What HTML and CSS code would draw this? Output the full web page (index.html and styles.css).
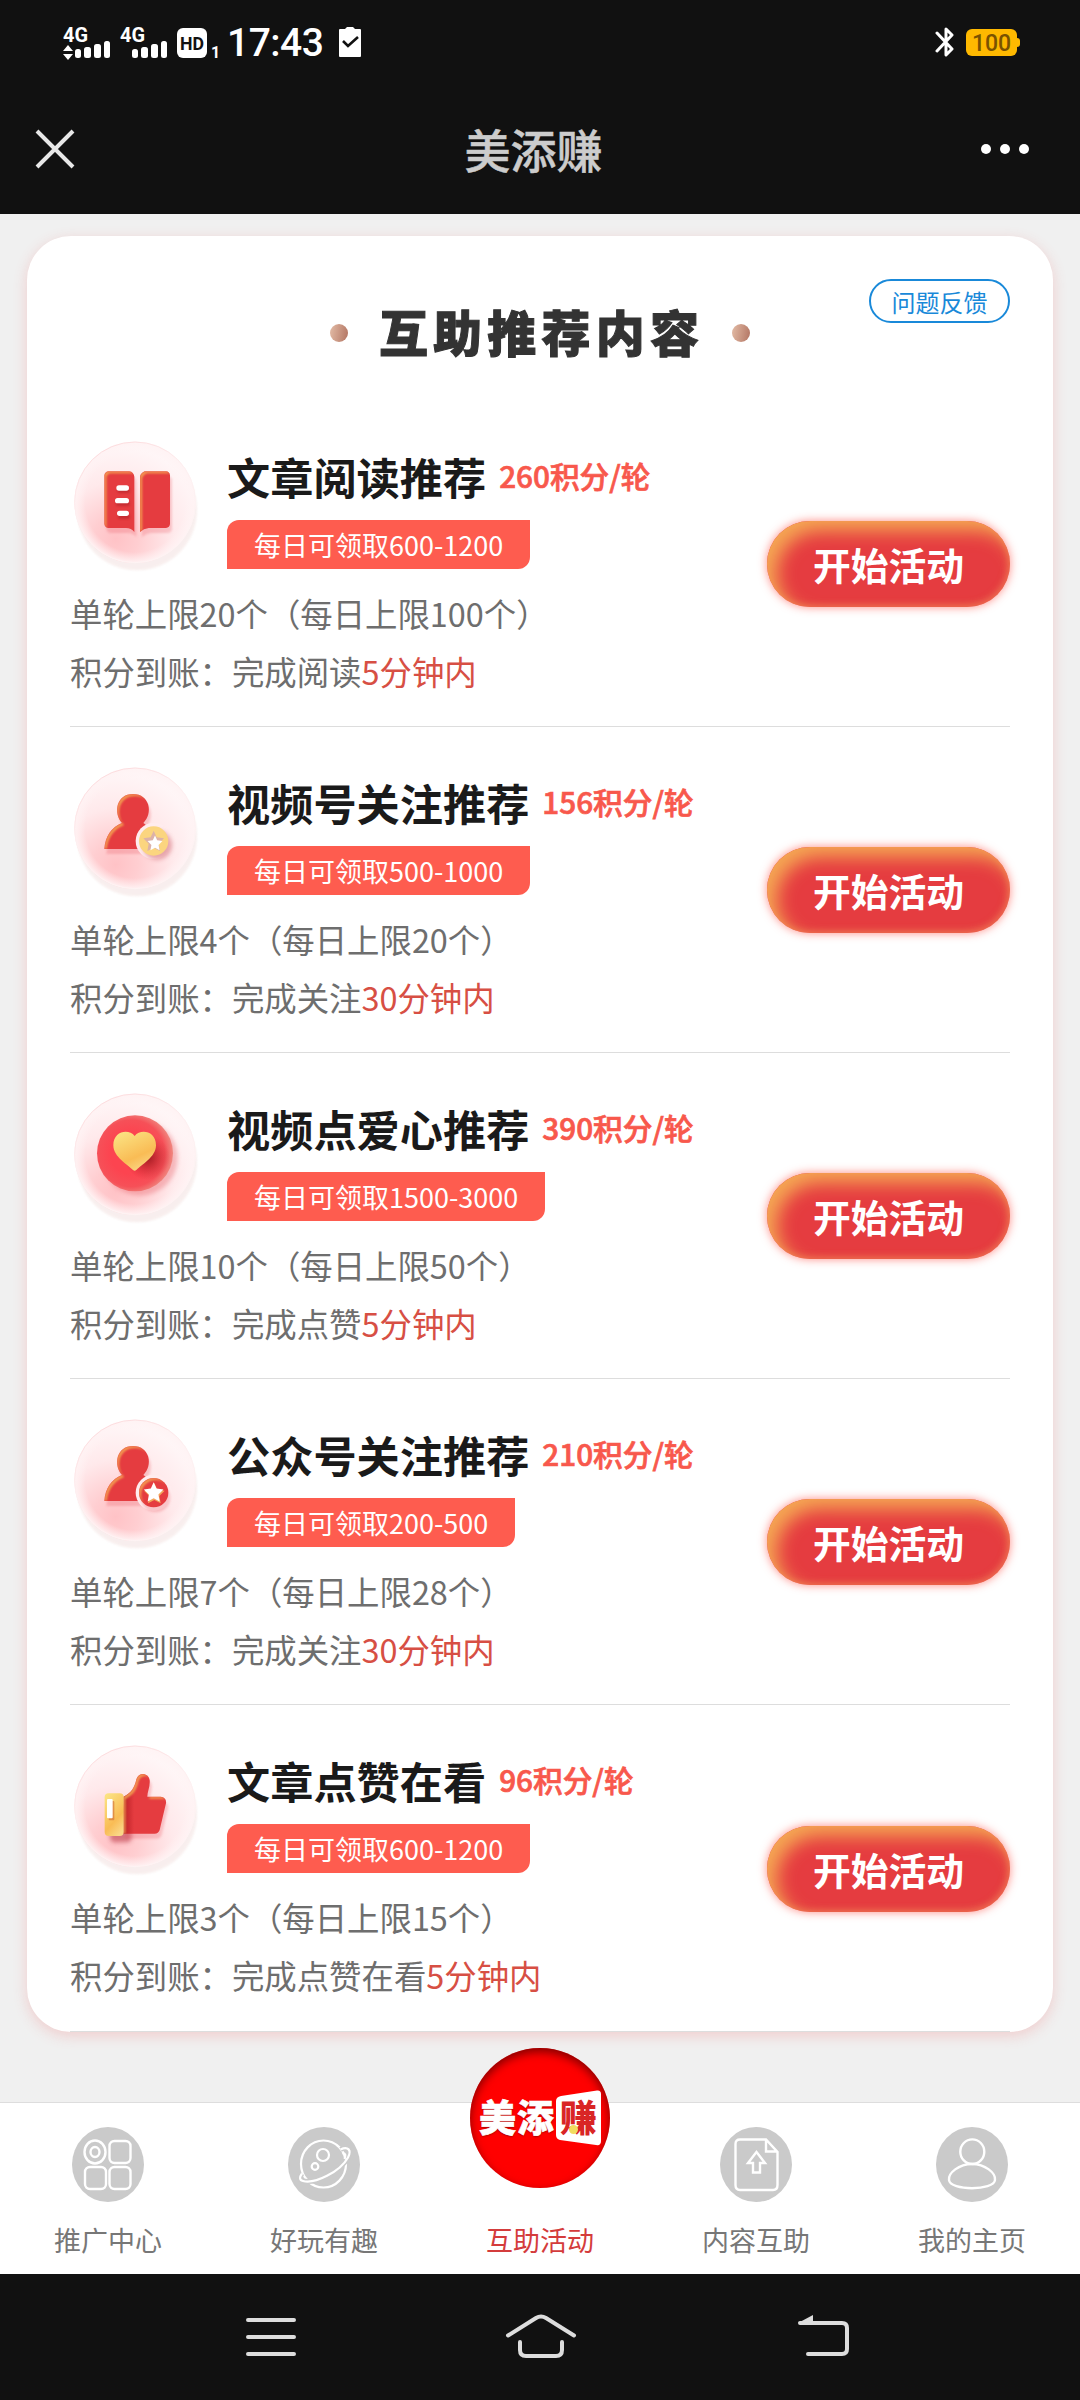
FILE: index.html
```html
<!DOCTYPE html>
<html lang="zh-CN">
<head>
<meta charset="utf-8">
<title>美添赚</title>
<link rel="stylesheet" href="styles.css">
</head>
<body>
<svg class="defs" width="0" height="0">
  <defs>
    <radialGradient id="disc" cx="0.34" cy="0.8" r="0.85">
      <stop offset="0" stop-color="#ffc2c6"/><stop offset="0.22" stop-color="#ffced1"/><stop offset="0.55" stop-color="#ffe9eb"/><stop offset="0.9" stop-color="#fff6f7"/>
    </radialGradient>
    <radialGradient id="discEdge"><stop offset="0.82" stop-color="#fff3f4" stop-opacity="0"/><stop offset="1" stop-color="#fff3f4" stop-opacity="0.95"/></radialGradient>
    <linearGradient id="rim" x1="0.2" y1="0" x2="0.6" y2="0.9"><stop offset="0" stop-color="#fcd9db"/><stop offset="0.5" stop-color="#fdf0f1"/><stop offset="1" stop-color="#fdf3f3"/></linearGradient>
    <linearGradient id="gold" x1="0.2" y1="0" x2="0.7" y2="1"><stop offset="0" stop-color="#fbe282"/><stop offset="0.65" stop-color="#f9bc55"/><stop offset="1" stop-color="#fad888"/></linearGradient>
    <radialGradient id="ball" cx="0.45" cy="0.5" r="0.55"><stop offset="0.5" stop-color="#fc4450"/><stop offset="0.8" stop-color="#f65058"/><stop offset="1" stop-color="#ef8880"/></radialGradient>
    <radialGradient id="ballShade"><stop offset="0" stop-color="#8e1418" stop-opacity="0.85"/><stop offset="1" stop-color="#c02028" stop-opacity="0"/></radialGradient>
    <linearGradient id="handShade" x1="0" x2="1"><stop offset="0" stop-color="#b81f25"/><stop offset="0.25" stop-color="#e53c40"/></linearGradient>
    <filter id="soft" x="-40%" y="-40%" width="180%" height="180%"><feGaussianBlur stdDeviation="7"/></filter>
    <filter id="soft3" x="-40%" y="-40%" width="180%" height="180%"><feGaussianBlur stdDeviation="3"/></filter>
    <filter id="glow" x="-20%" y="-20%" width="150%" height="150%" color-interpolation-filters="sRGB">
      <feOffset in="SourceAlpha" dx="6" dy="6" result="o"/>
      <feComposite in="SourceAlpha" in2="o" operator="out" result="e"/>
      <feGaussianBlur in="e" stdDeviation="3.5" result="b"/>
      <feFlood flood-color="#f4a552"/><feComposite in2="b" operator="in" result="f"/>
      <feComposite in="f" in2="SourceAlpha" operator="in" result="g"/>
      <feOffset in="SourceAlpha" dx="7" dy="16" result="s"/><feGaussianBlur in="s" stdDeviation="3" result="sb"/>
      <feFlood flood-color="#e8505a" flood-opacity="0.25"/><feComposite in2="sb" operator="in" result="sh"/>
      <feMerge><feMergeNode in="sh"/><feMergeNode in="SourceGraphic"/><feMergeNode in="g"/></feMerge>
    </filter>
    <symbol id="plate" viewBox="0 0 396 420" overflow="visible">
      <circle cx="207" cy="223" r="180" fill="#f7ebea" opacity="0.8" filter="url(#soft3)"/>
      <circle cx="201" cy="199" r="182" fill="url(#disc)"/>
      <circle cx="201" cy="199" r="182" fill="url(#discEdge)"/>
      <circle cx="201" cy="199" r="181" fill="none" stroke="url(#rim)" stroke-width="3"/>
    </symbol>
    <path id="person" d="M133 297 C136 258 154 232 186 219 C160 190 168 132 219 132 C270 132 280 190 250 219 Q270 232 244 240 Q222 268 241 297 Z"/>
    <path id="star" d="M0 -31 L9 -11 L31 -8 L15 8 L19 30 L0 20 L-19 30 L-15 8 L-31 -8 L-9 -11 Z"/>
  </defs>
</svg>

<header class="status">
  <svg class="signals" viewBox="0 0 160 36" width="160" height="36">
    <g fill="#fff">
      <text class="net" x="0" y="16.500" textLength="25" lengthAdjust="spacingAndGlyphs">4G</text>
      <path d="M0 26 L5 20 L10 26Z M0 29 L5 35 L10 29Z"/>
      <rect x="12" y="24" width="6" height="9" rx="2.5"/><rect x="21" y="22" width="7" height="11" rx="2.5"/><rect x="31" y="19" width="7" height="14" rx="2.5"/><rect x="41" y="16" width="6" height="17" rx="2.5"/>
      <text class="net" x="57" y="16.500" textLength="25" lengthAdjust="spacingAndGlyphs">4G</text>
      <rect x="69" y="24" width="6" height="9" rx="2.5"/><rect x="78" y="22" width="7" height="11" rx="2.5"/><rect x="88" y="19" width="7" height="14" rx="2.5"/><rect x="98" y="16" width="6" height="17" rx="2.5"/>
      <rect x="114" y="3" width="30" height="30" rx="6"/>
      <text class="sim" x="148" y="33">1</text>
    </g>
    <text class="hd" x="117" y="25" textLength="24" lengthAdjust="spacingAndGlyphs">HD</text>
  </svg>
  <span class="time">17:43</span>
  <svg class="clip" viewBox="0 0 22 30" width="22" height="30"><path fill="#fff" d="M1 2H6L8 0H14L16 2H21Q22 2 22 3V29Q22 30 21 30H1Q0 30 0 29V3Q0 2 1 2Z"/><path d="M4 14 L9 19 L19 10" fill="none" stroke="#111" stroke-width="2.6"/></svg>
  <svg class="bt" viewBox="0 0 20 32" width="20" height="32"><path d="M2 7 L17 23 L11 29 V3 L17 9 L2 25" fill="none" stroke="#fff" stroke-width="3" stroke-linejoin="round" stroke-linecap="round"/></svg>
  <span class="battery">100</span>
</header>

<nav class="titlebar">
  <svg viewBox="0 0 40 40" width="40" height="40"><path d="M2 2 L38 38 M38 2 L2 38" stroke="#e8e8e8" stroke-width="4" fill="none"/></svg>
  <h1>美添赚</h1>
  <svg viewBox="0 0 50 12" width="50" height="12"><g fill="#fff"><circle cx="6" cy="6" r="5"/><circle cx="25" cy="6" r="5"/><circle cx="44" cy="6" r="5"/></g></svg>
</nav>

<main class="page">
  <section class="card">
    <div class="card-head">
      <i class="dot"></i><h2>互助推荐内容</h2><i class="dot"></i>
      <a class="feedback">问题反馈</a>
    </div>

    <article class="item">
      <div class="info">
        <div class="top">
          <svg class="icon" viewBox="0 0 396 396">
            <use href="#plate" width="396" height="420"/>
            <g transform="translate(-54 -48)">
              <g filter="url(#glow)" fill="#e53c40">
                <path d="M176 154 H238 Q251 156 253 170 V336 Q244 324 228 324 H176 Q164 323 163 311 V166 Q165 155 176 154Z"/>
                <path d="M284 154 H348 Q359 155 360 166 V312 Q359 323 348 324 H296 Q281 326 270 336 V170 Q272 159 284 154Z"/>
              </g>
              <g stroke="#a81e22" stroke-width="14" stroke-linecap="round" opacity="0.5" filter="url(#soft3)"><path d="M209 212H233M205 251H233M211 290H233"/></g>
              <g stroke="#fff" stroke-width="16" stroke-linecap="round"><path d="M207 204H229M203 242H229M209 280H229"/></g>
            </g>
          </svg>
          <div class="heading">
            <div class="name"><h3>文章阅读推荐</h3><b>260积分/轮</b></div>
            <span class="tag">每日可领取600-1200</span>
          </div>
        </div>
        <p>单轮上限20个（每日上限100个）</p>
        <p>积分到账：完成阅读<em>5分钟内</em></p>
      </div>
      <a class="go">开始活动</a>
    </article>

    <article class="item">
      <div class="info">
        <div class="top">
          <svg class="icon" viewBox="0 0 396 396">
            <use href="#plate" width="396" height="420"/>
            <g transform="translate(-24 -36)">
              <use href="#person" fill="#e53c40" filter="url(#glow)"/>
              <circle cx="281" cy="273" r="54" fill="#ffecee"/>
              <circle cx="292" cy="285" r="44" fill="#d0606a" opacity="0.5" filter="url(#soft)"/>
              <circle cx="281" cy="273" r="44" fill="#fbd57f"/>
              <use href="#star" transform="translate(281 273)" fill="#dcb2a8"/>
              <use href="#star" transform="translate(285 279) scale(.72)" fill="#fff" filter="url(#soft3)"/>
            </g>
          </svg>
          <div class="heading">
            <div class="name"><h3>视频号关注推荐</h3><b>156积分/轮</b></div>
            <span class="tag">每日可领取500-1000</span>
          </div>
        </div>
        <p>单轮上限4个（每日上限20个）</p>
        <p>积分到账：完成关注<em>30分钟内</em></p>
      </div>
      <a class="go">开始活动</a>
    </article>

    <article class="item">
      <div class="info">
        <div class="top">
          <svg class="icon" viewBox="0 0 396 396">
            <use href="#plate" width="396" height="420"/>
            <g transform="translate(-24 -24)">
              <circle cx="240" cy="234" r="113" fill="#e86870" opacity="0.4" filter="url(#soft)"/>
              <circle cx="225" cy="220" r="114" fill="url(#ball)"/>
              <ellipse cx="262" cy="232" rx="68" ry="68" fill="url(#ballShade)"/>
              <path fill="url(#gold)" d="M224 168 C242 145 288 153 288 196 C288 231 244 255 229 270 Q224 275 219 270 C204 255 160 231 160 196 C160 153 206 145 224 168Z"/>
            </g>
          </svg>
          <div class="heading">
            <div class="name"><h3>视频点爱心推荐</h3><b>390积分/轮</b></div>
            <span class="tag">每日可领取1500-3000</span>
          </div>
        </div>
        <p>单轮上限10个（每日上限50个）</p>
        <p>积分到账：完成点赞<em>5分钟内</em></p>
      </div>
      <a class="go">开始活动</a>
    </article>

    <article class="item">
      <div class="info">
        <div class="top">
          <svg class="icon" viewBox="0 0 396 396">
            <use href="#plate" width="396" height="420"/>
            <g transform="translate(-24 -36)">
              <use href="#person" fill="#e53c40" filter="url(#glow)"/>
              <circle cx="281" cy="272" r="54" fill="#ffecee"/>
              <circle cx="281" cy="272" r="44" fill="#e53c40" filter="url(#glow)"/>
              <use href="#star" transform="translate(283 274)" fill="#f3a65c"/>
              <use href="#star" transform="translate(281 270) scale(.95)" fill="#fff"/>
            </g>
          </svg>
          <div class="heading">
            <div class="name"><h3>公众号关注推荐</h3><b>210积分/轮</b></div>
            <span class="tag">每日可领取200-500</span>
          </div>
        </div>
        <p>单轮上限7个（每日上限28个）</p>
        <p>积分到账：完成关注<em>30分钟内</em></p>
      </div>
      <a class="go">开始活动</a>
    </article>

    <article class="item">
      <div class="info">
        <div class="top">
          <svg class="icon" viewBox="0 0 396 396">
            <use href="#plate" width="396" height="420"/>
            <g transform="translate(-24 -30)">
              <rect x="150" y="225" width="65" height="112" rx="14" fill="#b83040" opacity="0.55" filter="url(#soft)"/>
              <path filter="url(#glow)" fill="url(#handShade)" d="M190 200 C214 190 224 172 229 148 C236 124 266 128 269 150 C271 170 262 184 262 200 H302 Q320 202 318 220 L299 300 Q295 311 284 311 H190Z"/>
              <rect x="134" y="190" width="57" height="128" rx="12" fill="url(#gold)"/>
              <rect x="146" y="213" width="17" height="58" rx="3" fill="#d06a36" opacity="0.6"/>
              <rect x="141" y="207" width="17" height="58" rx="3" fill="#fff"/>
            </g>
          </svg>
          <div class="heading">
            <div class="name"><h3>文章点赞在看</h3><b>96积分/轮</b></div>
            <span class="tag">每日可领取600-1200</span>
          </div>
        </div>
        <p>单轮上限3个（每日上限15个）</p>
        <p>积分到账：完成点赞在看<em>5分钟内</em></p>
      </div>
      <a class="go">开始活动</a>
    </article>
  </section>
</main>

<footer class="tabs">
  <a class="tab">
    <svg viewBox="0 0 72 75" width="72" height="75"><ellipse cx="36" cy="37.5" rx="36" ry="37.5" fill="#cacaca"/><g fill="none" stroke="#fff" stroke-width="2.4"><ellipse cx="23" cy="25" rx="10.5" ry="11.5"/><ellipse cx="23" cy="25" rx="4.5" ry="5"/><rect x="37.500" y="14" width="21" height="22" rx="5"/><rect x="13" y="40" width="21" height="22" rx="5"/><rect x="37.500" y="40" width="21" height="22" rx="5"/></g></svg>
    <span>推广中心</span>
  </a>
  <a class="tab">
    <svg viewBox="0 0 72 75" width="72" height="75"><ellipse cx="36" cy="37.500" rx="36" ry="37.500" fill="#cacaca"/><g fill="none" stroke="#fff" stroke-width="2.2"><ellipse cx="35.500" cy="37" rx="22.500" ry="23.500"/><path d="M52.500 22.500 C60 19 64 23 60 30.500 C52 45 27 57 15 54 C11 53 11.500 50 14 46.500" stroke="#cacaca" stroke-width="5"/><path d="M52.500 22.500 C60 19 64 23 60 30.500 C52 45 27 57 15 54 C11 53 11.500 50 14 46.500 M54.500 26.500 Q59 26 56.500 32"/><circle cx="35" cy="28" r="6"/><circle cx="27" cy="39.500" r="3.300"/></g></svg>
    <span>好玩有趣</span>
  </a>
  <a class="tab active">
    <div class="logo"><span class="logo-text">美添</span><span class="logo-box"><svg viewBox="0 0 46 56" width="46" height="56"><path d="M5 6 L41 .5 Q45 0 45 4 V51 Q45 56 40 55 L4 50 Q0 49 0 45 V11 Q0 7 5 6Z" fill="#fff"/></svg><b>赚</b><i></i></span></div>
    <span>互助活动</span>
  </a>
  <a class="tab">
    <svg viewBox="0 0 72 75" width="72" height="75"><ellipse cx="36" cy="37.500" rx="36" ry="37.500" fill="#cacaca"/><g fill="none" stroke="#fff" stroke-width="2.4"><path d="M20 12.500 H46 L57.500 25 V58 Q57.500 63 53 63 H20 Q15.500 63 15.500 58 V17 Q15.500 12.500 20 12.500Z M46 12.500 V24.500 H57.500"/><path d="M36.500 25 L45 36 H40 V45.500 H33 V36 H28Z"/></g></svg>
    <span>内容互助</span>
  </a>
  <a class="tab">
    <svg viewBox="0 0 72 75" width="72" height="75"><ellipse cx="36" cy="37.500" rx="36" ry="37.500" fill="#cacaca"/><g fill="none" stroke="#fff" stroke-width="2.4"><ellipse cx="36.300" cy="24.700" rx="12" ry="12.300"/><path d="M36 37 C49 37 60 46 59 53 C58 64 14 64 13 53 C12 46 23 37 36 37Z"/></g></svg>
    <span>我的主页</span>
  </a>
</footer>

<div class="sysnav">
  <svg viewBox="0 0 1080 126" width="1080" height="126"><g fill="none" stroke="#ddd" stroke-width="4" stroke-linecap="round" stroke-linejoin="round"><path d="M248 46H294M248 63H294M248 80H294"/><path d="M508 61.500 L536 44 Q541 41 546 44 L574 61.500 M520 68 V76 Q520 82 526 82 H556 Q562 82 562 76 V68"/><path d="M808 80 H842 Q847 80 847 75 V54 Q847 49 842 49 H800"/></g><path d="M798 49 L813 41 V50Z" fill="#ddd"/></svg>
</div>
</body>
</html>
```
FILE: styles.css
```css
* { box-sizing: border-box; }
body {
  margin: 0;
  width: 1080px;
  height: 2400px;
  display: flex;
  flex-direction: column;
  background: #f0f0f0;
  font-family: "Noto Sans CJK SC", sans-serif;
  overflow: hidden;
}
h1, h2, h3, p { margin: 0; }
em, i { font-style: normal; }
.defs { position: absolute; }

.status {
  height: 84px;
  padding: 0 60px 0 63px;
  display: flex;
  align-items: center;
  background: #111;
  font-family: Roboto, sans-serif;
}
.signals { margin-top: 1px; overflow: visible; }
.net { font-size: 21px; font-weight: 700; }
.sim { font-size: 16px; font-weight: 700; }
.hd { font-size: 19px; font-weight: 700; fill: #111; }
.time { width: 110px; padding: 2px 0 0 4px; font-size: 39px; font-weight: 500; letter-spacing: -0.5px; color: #fff; }
.clip { margin-left: 6px; }
.bt { margin-left: auto; }
.battery {
  position: relative;
  width: 51px;
  height: 27px;
  margin: 1px 3px 0 11px;
  border-radius: 6px;
  background: #ffb900;
  color: #7a5200;
  font-size: 23px;
  font-weight: 500;
  line-height: 29px;
  text-align: center;
}
.battery::after { content: ""; position: absolute; left: 50px; top: 9px; width: 4px; height: 9px; border-radius: 0 3px 3px 0; background: #ffb900; }

.titlebar {
  height: 130px;
  padding: 0 50px 0 35px;
  display: flex;
  align-items: center;
  justify-content: space-between;
  background: #111;
}
.titlebar h1 { font-size: 46px; line-height: 60px; font-weight: 500; color: #ccc; padding: 0 0 2px 12px; -webkit-text-stroke: 0.5px #ccc; }

.page { flex: 1; padding: 22px 27px 0; }
.card {
  background: #fff;
  border-radius: 44px;
  padding: 0 43px;
  box-shadow: 0 4px 14px rgba(240, 80, 80, 0.22);
}
.card-head {
  position: relative;
  height: 165px;
  padding-bottom: 32px;
  display: flex;
  align-items: flex-end;
  justify-content: center;
  gap: 32px;
}
.card-head h2 { font-size: 49px; line-height: 76px; font-weight: 900; letter-spacing: 5.200px; margin: 0 -4px 0 -1px; color: #333; -webkit-text-stroke: 1px #333; }
.dot { width: 18px; height: 18px; margin-bottom: 27px; border-radius: 50%; background: linear-gradient(100deg, #e3bca6, #b27462); }
.feedback {
  position: absolute;
  right: 0;
  top: 43px;
  width: 141px;
  height: 44px;
  border: 2px solid #1989d9;
  border-radius: 22px;
  font-size: 24px;
  line-height: 42px;
  text-align: center;
  color: #1989d9;
}

.item {
  height: 326px;
  padding-top: 35px;
  border-bottom: 1px solid #ddd;
  display: flex;
  justify-content: space-between;
}
.item:last-child { height: 327px; }
.top { display: flex; height: 133px; margin-bottom: 15px; gap: 27px; }
.icon { width: 132px; height: 132px; margin-left: -2px; overflow: visible; }
.name { height: 60px; margin-top: 10px; display: flex; align-items: center; }
.name h3 { font-size: 43.200px; line-height: 60px; font-weight: 700; color: #1a1a1a; }
.name b { margin-left: 13px; font-size: 29.700px; line-height: 60px; font-weight: 500; color: #f8584c; -webkit-text-stroke: 0.7px #f8584c; }
.tag {
  display: block;
  width: max-content;
  height: 49px;
  margin-top: 14px;
  padding: 0 27px;
  border-radius: 12px 0 12px 0;
  background: #fe5c4f;
  font-size: 27px;
  line-height: 50px;
  color: #fff;
}
.item p { font-size: 32.400px; line-height: 58px; color: #6e6e6e; white-space: nowrap; }
.item em { color: #d74f44; }
.go {
  align-self: center;
  width: 243px;
  height: 86px;
  margin-top: -34px;
  border-radius: 43px;
  background: #e53c40;
  box-shadow: inset 10px 10px 18px #f5a754, inset -2px -2px 6px rgba(240, 130, 90, 0.6), 0 0 10px rgba(255, 60, 50, 0.6);
  font-size: 37.800px;
  line-height: 86px;
  font-weight: 700;
  text-align: center;
  color: #fff;
}

.tabs { height: 172px; display: flex; background: #fff; border-top: 1px solid #ddd; }
.tab { flex: 1; display: flex; flex-direction: column; align-items: center; padding-top: 24px; color: #777; }
.tab > span { margin-top: 18px; font-size: 27px; line-height: 40px; }
.tab.active { padding-top: 0; color: #d43c3c; }
.tab.active > span { margin-top: 32px; }
.logo {
  width: 140px;
  height: 140px;
  margin-top: -55px;
  padding-left: 9px;
  display: flex;
  align-items: center;
  border-radius: 50%;
  background: #f00;
  box-shadow: inset 0 4px 10px rgba(90, 0, 0, 0.75);
}
.logo-text { width: 77px; margin-top: -5px; font-size: 37px; line-height: 50px; font-weight: 900; color: #fff; letter-spacing: 1px; white-space: nowrap; text-shadow: 0 1px 2px #900; -webkit-text-stroke: 0.6px #fff; }
.logo-box { position: relative; width: 46px; height: 56px; margin-top: -1px; flex: none; }
.logo-box svg { display: block; }
.logo-box b { position: absolute; left: 4px; top: 1px; font-size: 37px; line-height: 50px; font-weight: 900; color: #d92525; }
.logo-box i { position: absolute; left: 13px; top: 35px; width: 9px; height: 9px; border-radius: 50%; background: #f2dc60; }

.sysnav { height: 126px; background: #111; }
.sysnav svg { display: block; }
```
